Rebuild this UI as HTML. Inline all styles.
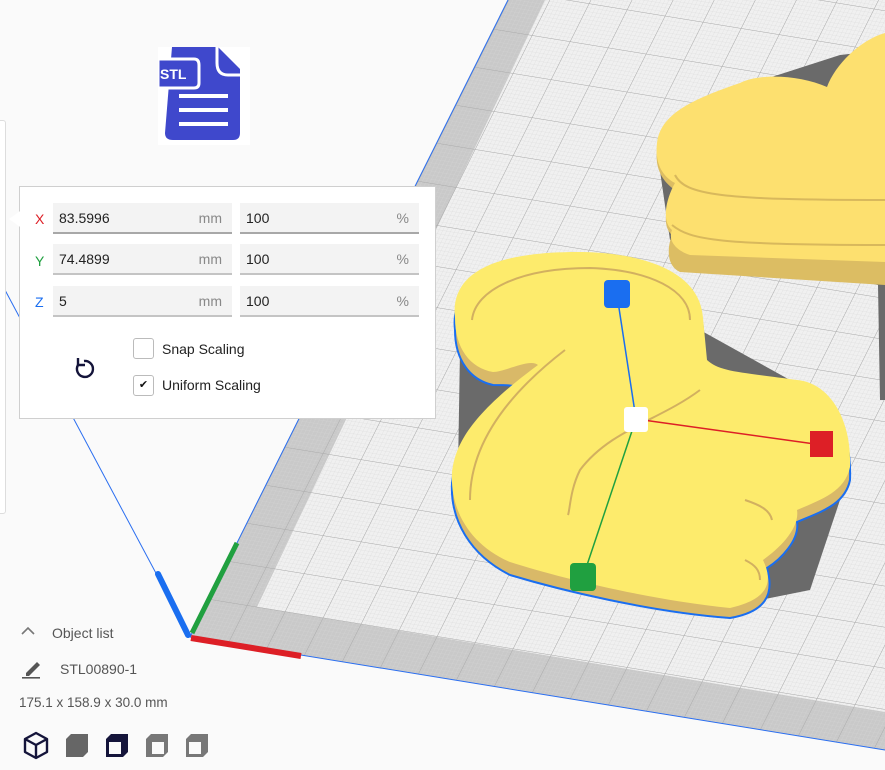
<!DOCTYPE html>
<html><head><meta charset="utf-8"><style>
body{margin:0;width:885px;height:770px;overflow:hidden;background:#fafafa;font-family:"Liberation Sans","DejaVu Sans",sans-serif;position:relative}
.a{position:absolute}
.f{position:absolute;height:31px;background:#f3f3f3;border-bottom:2px solid #c4c4c4;box-sizing:border-box;font-size:14px;color:#222;line-height:30px}
.f span{position:absolute;right:10px;color:#888}
.f b{font-weight:normal;position:absolute;left:6px}
.lab{position:absolute;font-size:14px}
</style></head><body>
<svg class="a" style="left:0;top:0" width="885" height="770">
<defs>
<pattern id="minor" width="3.8" height="3.8" patternUnits="userSpaceOnUse" patternTransform="matrix(1,0.163,-0.5,1,190,637)">
<path d="M0 0H3.8M0 0V3.8" stroke="#d6d6d6" stroke-width="0.5" fill="none"/></pattern>
<pattern id="major" width="38" height="38" patternUnits="userSpaceOnUse" patternTransform="matrix(1,0.163,-0.5,1,190,637)">
<path d="M0 0H38M0 0V38" stroke="#a8a8a8" stroke-width="1" fill="none"/></pattern>
</defs>
<polygon points="508,0 885,0 885,750 190,637" fill="#c9c9c9"/>
<polygon points="545,0 885,0 885,712 257,607" fill="#f0f0f0"/>
<polygon points="508,0 885,0 885,750 190,637" fill="url(#minor)"/>
<polygon points="508,0 885,0 885,750 190,637" fill="url(#major)"/>
<line x1="508" y1="0" x2="190" y2="637" stroke="#2a6ef0" stroke-width="1"/>
<line x1="190" y1="637" x2="885" y2="750" stroke="#2a6ef0" stroke-width="1"/>
<line x1="5" y1="290" x2="190" y2="637" stroke="#2a6ef0" stroke-width="1"/>
<!-- upper right object -->
<polygon points="657,150 700,100 840,55 885,50 885,400 880,400 878,285 670,240" fill="#6a6a6a"/>
<path d="M657,150 C660,120 690,105 740,88 C760,78 800,80 827,92 C835,70 860,45 885,38 L885,285 L680,272 C665,265 668,245 672,235 C660,225 668,200 675,190 C660,180 655,165 657,150Z" fill="#dcbd63"/>
<path d="M657,143 C660,115 690,100 740,83 C760,73 800,75 827,87 C835,65 860,40 885,33 L885,262 L690,255 C675,250 668,240 672,230 C660,220 668,195 675,183 C660,175 655,160 657,143Z" fill="#fde06f"/>
<path d="M675,175 C685,195 720,200 885,200 M672,225 C690,240 720,245 885,245" stroke="#d8b85c" stroke-width="2" fill="none"/>
<!-- squirrel shadow -->
<polygon points="460,350 480,330 560,330 700,330 790,380 850,470 810,590 760,600 470,540 458,470" fill="#6a6a6a"/>
<!-- squirrel side -->
<path d="M455,330 C450,285 490,262 577,262 C640,262 700,280 703,330 L707,372 C720,385 740,382 797,392 C830,395 852,430 850,480 C845,505 820,512 797,522 C800,540 780,560 767,568 C775,595 765,612 730,618 C650,612 560,590 510,575 C470,555 450,520 452,483 C455,455 470,425 520,390 C520,385 505,385 493,385 C470,380 455,360 455,330Z" fill="#d9b968" stroke="#1a6ef0" stroke-width="2"/>
<!-- squirrel top -->
<path d="M455,318 C450,275 490,252 577,252 C640,252 700,270 703,318 L707,360 C720,372 740,372 797,380 C830,383 852,420 850,467 C845,492 820,500 797,510 C800,528 780,548 763,560 C775,585 765,600 730,608 C650,600 560,578 510,562 C470,545 450,510 452,473 C455,445 470,415 538,365 C530,358 505,372 493,372 C470,368 455,348 455,318Z" fill="#fdeb6c"/>
<path d="M472,320 C475,290 520,268 590,268 C650,270 690,290 690,320" stroke="#d2b060" stroke-width="2" fill="none"/>
<path d="M565,350 C500,400 470,450 470,500" stroke="#d2b060" stroke-width="2" fill="none"/>
<path d="M700,390 C660,420 610,430 580,470 C570,490 570,510 568,515" stroke="#d2b060" stroke-width="2" fill="none"/>
<path d="M745,500 C760,505 770,510 772,520 M745,560 C755,565 760,570 760,580" stroke="#d2b060" stroke-width="2" fill="none"/>
<!-- gizmo -->
<line x1="617" y1="295" x2="636" y2="419" stroke="#1a6ef0" stroke-width="1.5"/>
<line x1="636" y1="419" x2="822" y2="445" stroke="#dd1f26" stroke-width="1.5"/>
<line x1="636" y1="419" x2="583" y2="577" stroke="#20a040" stroke-width="1.5"/>
<rect x="604" y="280" width="26" height="28" rx="4" fill="#1a6ef0"/>
<rect x="624" y="407" width="24" height="25" rx="3" fill="#fff"/>
<rect x="810" y="431" width="23" height="26" fill="#dd1f26"/>
<rect x="570" y="563" width="26" height="28" rx="4" fill="#20a040"/>
<!-- axes -->
<line x1="158" y1="574" x2="188" y2="635" stroke="#1a6ef0" stroke-width="6" stroke-linecap="round"/>
<line x1="192" y1="633" x2="237" y2="543" stroke="#20a040" stroke-width="5"/>
<line x1="191" y1="638" x2="301" y2="656" stroke="#dd1f26" stroke-width="6"/>
</svg>
<!-- left panel edge -->
<div class="a" style="left:-6px;top:120px;width:10px;height:392px;background:#fff;border:1px solid #ddd;border-radius:3px"></div>
<!-- STL icon -->
<div class="a" style="left:158px;top:47px;width:92px;height:98px;background:#fff"></div>
<svg class="a" style="left:158px;top:47px" width="92" height="98">
<path d="M14,0 H60 L82,22 V86 Q82,93 75,93 H15 Q7,93 7,86 Z" fill="#3f48cc"/>
<path d="M59,0 V16 Q59,28 70,28 H82" stroke="#fff" stroke-width="3" fill="none"/>
<path d="M0,12 H36 Q41,12 41,18 V36 Q41,41 36,41 H0Z" fill="#3f48cc" stroke="#fff" stroke-width="3"/>
<text x="2" y="32" font-family="Liberation Sans" font-weight="bold" font-size="14" fill="#fff">STL</text>
<rect x="21" y="47" width="49" height="4" fill="#fff"/>
<rect x="21" y="61" width="49" height="4" fill="#fff"/>
<rect x="21" y="75" width="49" height="4" fill="#fff"/>
</svg>
<!-- scale panel -->
<div class="a" style="left:19px;top:186px;width:415px;height:231px;background:#fff;border:1px solid #cfcfcf"></div>
<div class="a" style="left:9px;top:209px;width:14px;height:20px;background:#fff;clip-path:polygon(100% 0,0 50%,100% 100%)"></div>
<div class="lab" style="left:35px;top:211px;color:#dd1f26">X</div>
<div class="lab" style="left:35px;top:253px;color:#20a040">Y</div>
<div class="lab" style="left:35px;top:294px;color:#1a6ef0">Z</div>
<div class="f" style="left:53px;top:203px;width:179px;border-bottom-color:#a8a8a8"><b>83.5996</b><span>mm</span></div>
<div class="f" style="left:240px;top:203px;width:179px;border-bottom-color:#a8a8a8"><b>100</b><span>%</span></div>
<div class="f" style="left:53px;top:244px;width:179px"><b>74.4899</b><span>mm</span></div>
<div class="f" style="left:240px;top:244px;width:179px"><b>100</b><span>%</span></div>
<div class="f" style="left:53px;top:286px;width:179px"><b>5</b><span>mm</span></div>
<div class="f" style="left:240px;top:286px;width:179px"><b>100</b><span>%</span></div>
<svg class="a" style="left:72px;top:355px" width="26" height="26"><path d="M6,10 A8,8 0 1 0 12,6" stroke="#14143a" stroke-width="2.4" fill="none"/><path d="M6,3 V10 H13" stroke="#14143a" stroke-width="2.4" fill="none"/></svg>
<div class="a" style="left:133px;top:338px;width:19px;height:19px;border:1px solid #bbb;border-radius:3px"></div>
<div class="lab" style="left:162px;top:341px;color:#222">Snap Scaling</div>
<div class="a" style="left:133px;top:375px;width:19px;height:19px;border:1px solid #bbb;border-radius:3px;font-size:11px;text-align:center;line-height:19px;color:#111">✔</div>
<div class="lab" style="left:162px;top:377px;color:#222">Uniform Scaling</div>
<!-- bottom left -->
<svg class="a" style="left:20px;top:625px" width="16" height="12"><path d="M2,9 L8,3 L14,9" stroke="#777" stroke-width="1.6" fill="none"/></svg>
<div class="lab" style="left:52px;top:625px;color:#555">Object list</div>
<svg class="a" style="left:21px;top:659px" width="22" height="20"><path d="M5,14 L16,3 L19,6 L8,17 H5Z" fill="#555"/><rect x="1" y="18" width="18" height="1.6" fill="#555"/></svg>
<div class="lab" style="left:60px;top:661px;color:#555">STL00890-1</div>
<div class="lab" style="left:19px;top:695px;color:#555;font-size:13.5px">175.1 x 158.9 x 30.0 mm</div>
<svg class="a" style="left:20px;top:730px" width="200" height="32">
<g fill="none" stroke="#14143a" stroke-width="2.4" stroke-linejoin="round"><path d="M16,3 L27,9 V22 L16,28 L5,22 V9Z M5,9 L16,15 L27,9 M16,15 V28"/></g>
<path d="M46,9 L51,4 H68 V22 L63,27 H46Z" fill="#666"/>
<path d="M86,9 L91,4 H108 V22 L103,27 H86Z" fill="#14143a"/><rect x="89" y="12" width="12" height="12" fill="#fafafa"/>
<path d="M126,9 L131,4 H148 V22 L143,27 H126Z" fill="#777"/><rect x="132" y="12" width="12" height="12" fill="#fafafa"/>
<path d="M166,9 L171,4 H188 V22 L183,27 H166Z" fill="#777"/><rect x="169" y="12" width="12" height="12" fill="#fafafa"/>
</svg>
</body></html>
